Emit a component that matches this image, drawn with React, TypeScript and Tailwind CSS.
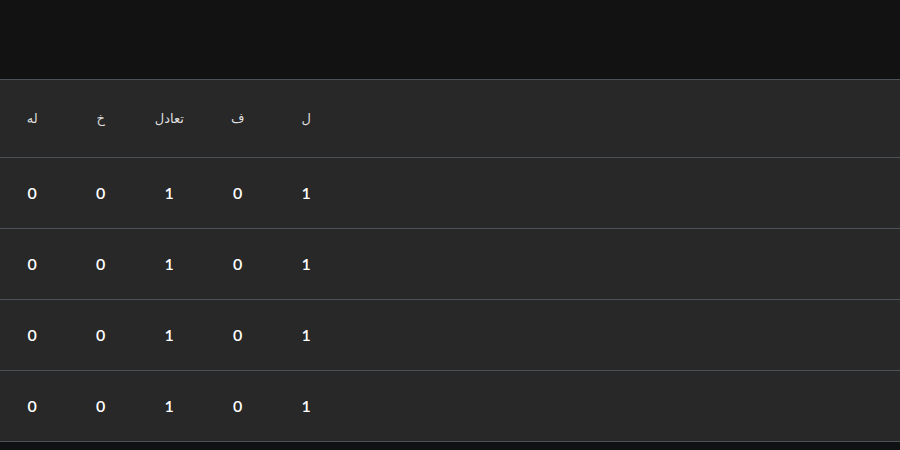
const headers = ['له', 'خ', 'تعادل', 'ف', 'ل'];

const rows = [
  ['0', '0', '1', '0', '1'],
  ['0', '0', '1', '0', '1'],
  ['0', '0', '1', '0', '1'],
  ['0', '0', '1', '0', '1'],
];

export default function App() {
  return (
    <div className="w-[900px] h-[450px] bg-[#121212] flex flex-col overflow-hidden">
      {/* top spacer */}
      <div className="h-[79px] bg-[#121212]" />

      {/* standings table */}
      <div className="bg-[#282828] border-t border-[#4d5258]">
        <div className="h-[78px] flex items-center border-b border-[#4d5258] -ml-0.5">
          {headers.map((h, i) => (
            <div
              key={i}
              className="w-[68.5px] text-center text-[13px] text-[#dedede]"
              style={{ fontFamily: '"DejaVu Sans", sans-serif' }}
            >
              {h}
            </div>
          ))}
        </div>

        {rows.map((row, r) => (
          <div key={r} className="h-[71px] flex items-center border-b border-[#4d5258] -ml-0.5">
            {row.map((v, i) => (
              <div
                key={i}
                className="w-[68.5px] text-center text-[16px] font-semibold text-white"
                style={{ fontFamily: 'Lato, sans-serif' }}
              >
                {v}
              </div>
            ))}
          </div>
        ))}
      </div>

      <div className="flex-1 bg-[#0f1113]" />
    </div>
  );
}
